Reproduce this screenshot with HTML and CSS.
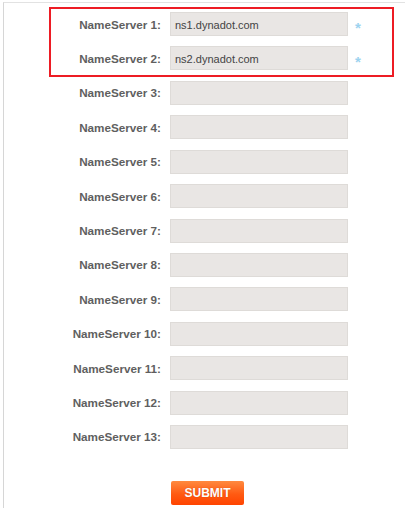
FILE: index.html
```html
<!DOCTYPE html>
<html lang="en">
<head>
  <meta charset="UTF-8">
  <title>Name Servers</title>
  <link rel="stylesheet" href="styles.css">
</head>
<body>

<div class="panel">
  <form class="ns-form" onsubmit="return false">
    <!-- Highlighted required servers -->
    <div class="highlight">
      <div class="row"><label for="ns1">NameServer 1:</label><input type="text" id="ns1" value="ns1.dynadot.com"><span class="req">*</span></div>
      <div class="row"><label for="ns2">NameServer 2:</label><input type="text" id="ns2" value="ns2.dynadot.com"><span class="req">*</span></div>
    </div>

    <div class="row"><label for="ns3">NameServer 3:</label><input type="text" id="ns3"></div>
    <div class="row"><label for="ns4">NameServer 4:</label><input type="text" id="ns4"></div>
    <div class="row"><label for="ns5">NameServer 5:</label><input type="text" id="ns5"></div>
    <div class="row"><label for="ns6">NameServer 6:</label><input type="text" id="ns6"></div>
    <div class="row"><label for="ns7">NameServer 7:</label><input type="text" id="ns7"></div>
    <div class="row"><label for="ns8">NameServer 8:</label><input type="text" id="ns8"></div>
    <div class="row"><label for="ns9">NameServer 9:</label><input type="text" id="ns9"></div>
    <div class="row"><label for="ns10">NameServer 10:</label><input type="text" id="ns10"></div>
    <div class="row"><label for="ns11">NameServer 11:</label><input type="text" id="ns11"></div>
    <div class="row"><label for="ns12">NameServer 12:</label><input type="text" id="ns12"></div>
    <div class="row"><label for="ns13">NameServer 13:</label><input type="text" id="ns13"></div>

    <div class="actions">
      <button type="submit" class="submit-btn">SUBMIT</button>
    </div>
  </form>
</div>

</body>
</html>
```

FILE: styles.css
```css
* { box-sizing: border-box; }

html, body {
  height: 100%;
}

body {
  margin: 0;
  background: #fff;
  font-family: "Liberation Sans", Arial, sans-serif;
}

.panel {
  margin: 2px 0 0 3px;
  min-height: calc(100% - 2px);
  border-left: 1px solid #d6d6d6;
  border-top: 1px solid #e2e2e2;
  padding: 0 0 0 47px;
}

.ns-form {
  display: flex;
  flex-direction: column;
}

.highlight {
  width: 345px;
  margin: 4px 0 4px -2px;
  padding: 3px 0 4.6px;
  border: 2px solid #ed1c24;
}

.row {
  display: flex;
  align-items: center;
  height: 24px;
  margin-bottom: 10.4px;
}

.highlight .row:last-child {
  margin-bottom: 0;
}

.row label {
  width: 110px;
  margin-right: 9px;
  text-align: right;
  font-size: 11.7px;
  font-weight: bold;
  color: #5f5f5f;
}

.row input {
  width: 178px;
  height: 24px;
  padding: 2px 4px 0;
  border: 1px solid #dedbd8;
  background: #e9e6e4;
  font-family: "Liberation Sans", Arial, sans-serif;
  font-size: 11px;
  color: #444;
  outline: none;
}

.req {
  margin-left: 7px;
  font-size: 15px;
  font-weight: bold;
  color: #9dd3ef;
  line-height: 1;
  padding-top: 6px;
}

.actions {
  margin: 21.6px 0 0 120px;
}

.submit-btn {
  width: 73px;
  height: 24px;
  border: none;
  border-radius: 2px;
  background: linear-gradient(#ff8a40, #ff5a12 55%, #ff4400);
  color: #fff;
  font-family: "Liberation Sans", Arial, sans-serif;
  font-size: 12px;
  font-weight: bold;
  text-shadow: 0 0 1px rgba(150, 40, 0, 0.5);
  cursor: pointer;
  padding: 0;
}
```
